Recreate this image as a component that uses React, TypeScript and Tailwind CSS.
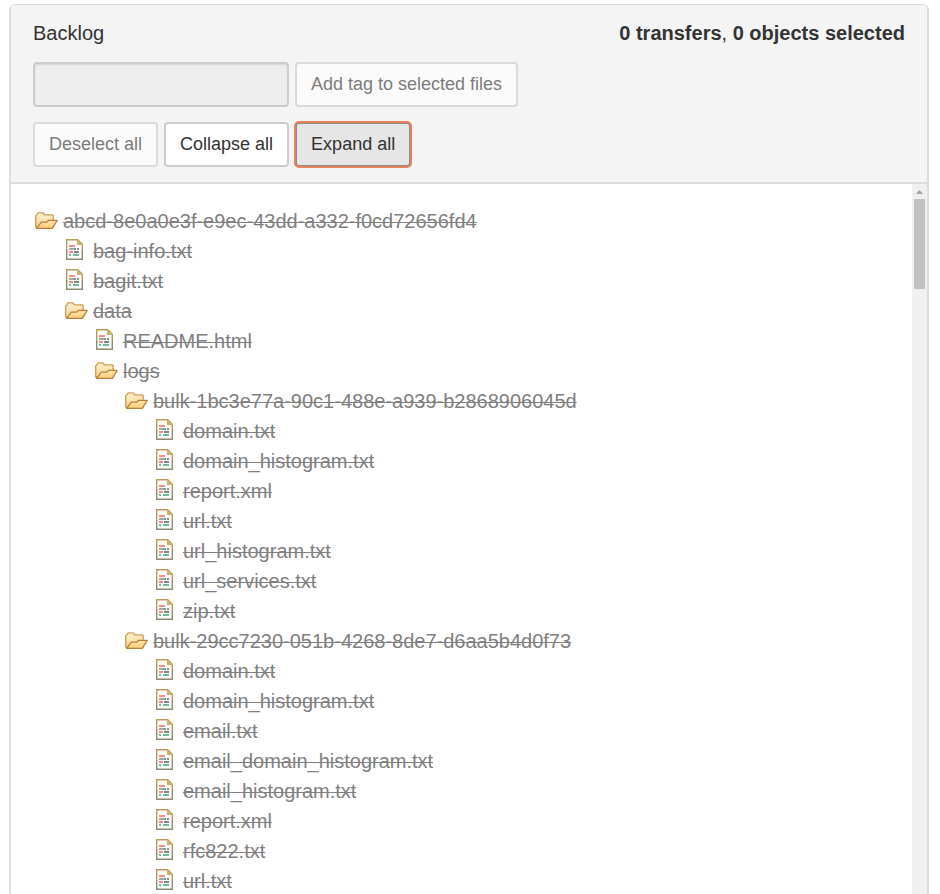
import React from "react";
import clsx from "clsx";

type Node = {
  name: string;
  depth: number;
  kind: "folder" | "file";
};

const folder = (depth: number, name: string): Node => ({ name, depth, kind: "folder" });
const file = (depth: number, name: string): Node => ({ name, depth, kind: "file" });

const NODES: Node[] = [
  folder(0, "abcd-8e0a0e3f-e9ec-43dd-a332-f0cd72656fd4"),
  file(1, "bag-info.txt"),
  file(1, "bagit.txt"),
  folder(1, "data"),
  file(2, "README.html"),
  folder(2, "logs"),
  folder(3, "bulk-1bc3e77a-90c1-488e-a939-b2868906045d"),
  file(4, "domain.txt"),
  file(4, "domain_histogram.txt"),
  file(4, "report.xml"),
  file(4, "url.txt"),
  file(4, "url_histogram.txt"),
  file(4, "url_services.txt"),
  file(4, "zip.txt"),
  folder(3, "bulk-29cc7230-051b-4268-8de7-d6aa5b4d0f73"),
  file(4, "domain.txt"),
  file(4, "domain_histogram.txt"),
  file(4, "email.txt"),
  file(4, "email_domain_histogram.txt"),
  file(4, "email_histogram.txt"),
  file(4, "report.xml"),
  file(4, "rfc822.txt"),
  file(4, "url.txt"),
];

const INDENT = ["pl-0", "pl-[30px]", "pl-[60px]", "pl-[90px]", "pl-[120px]"];

const FolderIcon = () => (
  <svg width="24" height="20" viewBox="0 0 24 20" aria-hidden="true">
    <defs>
      <linearGradient id="folderBack" x1="0" y1="0" x2="0" y2="1">
        <stop offset="0" stopColor="#fdf3cf" />
        <stop offset="1" stopColor="#f6cf8e" />
      </linearGradient>
      <linearGradient id="folderFront" x1="0" y1="0" x2="0" y2="1">
        <stop offset="0" stopColor="#ffe9b0" />
        <stop offset="1" stopColor="#fcc877" />
      </linearGradient>
    </defs>
    <path
      d="M1.700 16V5L3 3.600l1-1.800h5l1.300 2h7.900l1 1V16z"
      fill="url(#folderBack)"
      stroke="#cf9a55"
      strokeWidth="1.3"
      strokeLinejoin="round"
    />
    <path
      d="M2.500 17.300 7.400 11.200h5.200l2-1.900h8.600L18.300 17.300z"
      fill="url(#folderFront)"
      stroke="#b9813c"
      strokeWidth="1.3"
      strokeLinejoin="round"
    />
  </svg>
);

const FileIcon = () => (
  <svg width="17" height="21" viewBox="0 0 17 21" aria-hidden="true">
    <path d="M.7.7h11l4.600 4.600v15H.7z" fill="#fdfdfb" />
    <path d="M.7 11V.7h11l4.600 4.600V11" fill="none" stroke="#b99b58" strokeWidth="1.4" />
    <path d="M.7 11v9.300h15.600V11" fill="none" stroke="#8c8a70" strokeWidth="1.4" />
    <path d="M11 .7v5.300h5.300z" fill="#cdae66" />
    <path d="M3 7h6" stroke="#f58a8a" strokeWidth="2" />
    <path d="M3 10h5" stroke="#a3a7a3" strokeWidth="2" />
    <path d="M8 10h2M11 10h2" stroke="#8b8f8c" strokeWidth="2" />
    <path d="M3 13h4" stroke="#f58a8a" strokeWidth="2" />
    <path d="M8 13h5" stroke="#7d8984" strokeWidth="2" />
    <path d="M3 16h2M7 16h6" stroke="#73b79e" strokeWidth="2" />
  </svg>
);

const buttonBase = "h-[45px] rounded-[4px] border-2 px-[14px] pb-0.5 text-[18px] leading-6";

export default function App() {
  return (
    <main className="h-screen overflow-hidden bg-white pt-1 pr-[11px] pl-[9px] font-['Liberation_Sans',Arial,sans-serif] text-[#333]">
      <section className="flex h-full flex-col rounded-t-[6px] border-x-2 border-t border-[#ddd]">
        <header className="rounded-t-[4px] border-b-2 border-[#ddd] bg-[#f4f4f4] px-[22px] pt-[13px] pb-[15px]">
          <div className="flex items-center justify-between text-[20px] leading-[30px]">
            <h1>Backlog</h1>
            <p>
              <strong>0 transfers</strong>, <strong>0 objects selected</strong>
            </p>
          </div>

          <div className="mt-[14px] flex gap-1.5">
            <input
              type="text"
              aria-label="Tag"
              disabled
              className="h-[45px] w-64 rounded-[4px] border-2 border-[#ccc] bg-[#eee] px-3 text-[18px] shadow-[inset_0_1px_2px_rgba(0,0,0,0.1)]"
            />
            <button disabled className={clsx(buttonBase, "border-[#dadada] bg-[#fbfbfb] text-[#7c7c7c]")}>
              Add tag to selected files
            </button>
          </div>

          <div className="mt-[15px] flex gap-1.5">
            <button disabled className={clsx(buttonBase, "border-[#dadada] bg-[#fbfbfb] text-[#7c7c7c]")}>
              Deselect all
            </button>
            <button className={clsx(buttonBase, "border-[#ccc] bg-white")}>Collapse all</button>
            <button className={clsx(buttonBase, "border-[#8c8c8c] bg-[#e6e6e6] outline-2 -outline-offset-1 outline-[#e9825b]")}>
              Expand all
            </button>
          </div>
        </header>

        <div className="flex min-h-0 flex-1">
          <ul className="min-w-0 flex-1 overflow-hidden pt-[22px] pl-[22px]">
            {NODES.map((node, i) => (
              <li key={i} className={clsx("flex h-[30px] items-center text-[20px] leading-[30px] text-[#808080]", INDENT[node.depth])}>
                <span className={clsx("flex w-[30px] shrink-0", node.kind === "file" ? "pb-[3px] pl-[3px]" : "pb-px pl-px")}>
                  {node.kind === "folder" ? <FolderIcon /> : <FileIcon />}
                </span>
                <span className="whitespace-nowrap line-through decoration-1">{node.name}</span>
              </li>
            ))}
          </ul>

          {/* Scrollbar */}
          <div className="flex w-[15px] flex-col items-center bg-[#f0f0f0]" aria-hidden="true">
            <svg width="15" height="15" viewBox="0 0 15 15">
              <path d="M4 10h7L7.500 6z" fill="#a3a3a3" />
            </svg>
            <div className="h-[90px] w-[11px] bg-[#c1c1c1]" />
          </div>
        </div>
      </section>
    </main>
  );
}
